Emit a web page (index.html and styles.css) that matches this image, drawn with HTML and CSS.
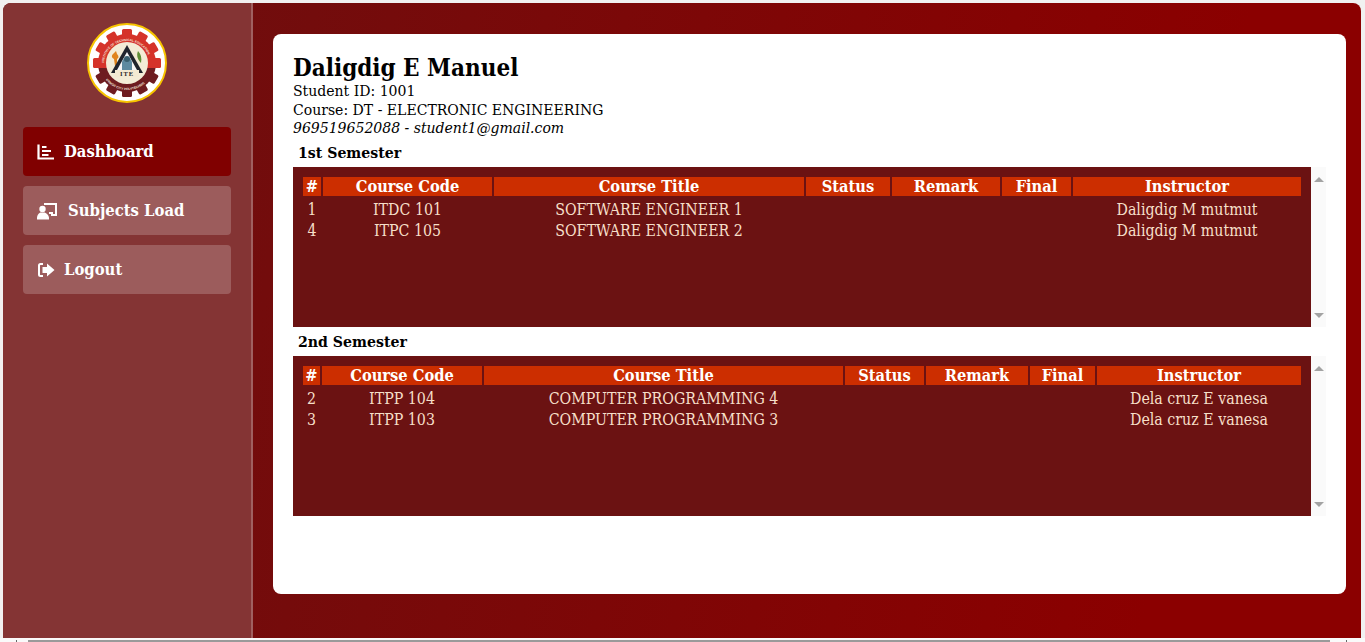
FILE: index.html
```html
<!DOCTYPE html>
<html lang="en">
<head>
<meta charset="utf-8">
<title>Student Dashboard</title>
<link rel="stylesheet" href="styles.css">
</head>
<body>
<div class="frame">
  <aside class="sidebar">
    <svg class="logo" viewBox="0 0 80 80" role="img" aria-label="ITE seal">
      <defs>
        <path id="arcTop" d="M17 41a23 23 0 0 1 46 0"/>
        <path id="arcBottom" d="M18.200 56a27 27 0 0 0 43.600 0"/>
        <clipPath id="clipTop"><rect x="0" y="0" width="80" height="45"/></clipPath>
        <clipPath id="clipBottom"><rect x="0" y="45" width="80" height="35"/></clipPath>
        <g id="gear">
          <circle cx="40" cy="40" r="29"/>
          <rect x="35" y="6" width="10" height="8" rx="1.500"/>
          <rect x="35" y="6" width="10" height="8" rx="1.500" transform="rotate(30 40 40)"/>
          <rect x="35" y="6" width="10" height="8" rx="1.500" transform="rotate(60 40 40)"/>
          <rect x="35" y="6" width="10" height="8" rx="1.500" transform="rotate(90 40 40)"/>
          <rect x="35" y="6" width="10" height="8" rx="1.500" transform="rotate(120 40 40)"/>
          <rect x="35" y="6" width="10" height="8" rx="1.500" transform="rotate(150 40 40)"/>
          <rect x="35" y="6" width="10" height="8" rx="1.500" transform="rotate(180 40 40)"/>
          <rect x="35" y="6" width="10" height="8" rx="1.500" transform="rotate(210 40 40)"/>
          <rect x="35" y="6" width="10" height="8" rx="1.500" transform="rotate(240 40 40)"/>
          <rect x="35" y="6" width="10" height="8" rx="1.500" transform="rotate(270 40 40)"/>
          <rect x="35" y="6" width="10" height="8" rx="1.500" transform="rotate(300 40 40)"/>
          <rect x="35" y="6" width="10" height="8" rx="1.500" transform="rotate(330 40 40)"/>
        </g>
      </defs>
      <circle cx="40" cy="40" r="39" fill="#fff" stroke="#f7c400" stroke-width="2"/>
      <use href="#gear" fill="#d5332a" clip-path="url(#clipTop)"/>
      <use href="#gear" fill="#6e1c20" clip-path="url(#clipBottom)"/>
      <circle cx="40" cy="40" r="21" fill="#f3ecd6"/>
      <text class="seal-text"><textPath href="#arcTop" startOffset="2%">INSTITUTE OF TECHNICAL EDUCATION</textPath></text>
      <text class="seal-text"><textPath href="#arcBottom" startOffset="2%">ORMOC CITY POLYTECHNIC</textPath></text>
      <path d="M26 31c-2 2-1 4 1 5l1 7h2l0-7c2-1 2-3 0-5l-1-3z" fill="#e0841c"/>
      <path d="M51 28c3 3 4 7 3 12-3-3-5-7-3-12z" fill="#5f8f37"/>
      <path d="M40 22 24 50h32z" fill="#20242c"/>
      <path d="M40 29 30 47h20z" fill="#f7f7f7"/>
      <path d="M35 47v-7c0-7 10-7 10 0v7z" fill="#5d8aa0"/>
      <circle cx="40" cy="36" r="3" fill="#39606f"/>
      <rect x="28" y="47" width="24" height="7" fill="#f3ead2"/>
      <text class="seal-ite" x="40" y="53">ITE</text>
    </svg>
    <nav class="menu">
      <a class="item active" href="#">
        <svg class="icon" viewBox="0 0 18 18"><path d="M1.500 1.500v14h15.500" fill="none" stroke="#fff" stroke-width="2.200"/><path d="M5 4h4.500M5 8h9M5 12h6.500" fill="none" stroke="#fff" stroke-width="1.800"/></svg>
        <span>Dashboard</span>
      </a>
      <a class="item item-load" href="#">
        <svg class="icon icon-wide" viewBox="0 0 21 18"><path d="M7 1h13v13h-6v-2h4V3H7z" fill="#fff"/><path d="M12 10h4v2h-4z" fill="#fff"/><circle cx="5.500" cy="7" r="3.200" fill="#fff"/><path d="M0 16c0-3 2-5.500 4-5.500h3c2 0 5 2.500 5 5.500v1.500H0z" fill="#fff"/></svg>
        <span>Subjects Load</span>
      </a>
      <a class="item" href="#">
        <svg class="icon" viewBox="0 0 18 18"><path d="M6 3H3.500C2.500 3 2 3.500 2 4.500v9c0 1 .5 1.500 1.500 1.500H6" fill="none" stroke="#fff" stroke-width="2"/><path d="M10 2.500 17.500 9 10 15.500V12H5.500V6H10z" fill="#fff"/></svg>
        <span>Logout</span>
      </a>
    </nav>
  </aside>
  <main class="main">
    <section class="card">
      <h1 class="name">Daligdig E Manuel</h1>
      <div class="line">Student ID: 1001</div>
      <div class="line">Course: DT - ELECTRONIC ENGINEERING</div>
      <div class="line contact">969519652088 - student1@gmail.com</div>
      <h2 class="sem">1st Semester</h2>
      <div class="box">
        <div class="box-body">
          <table class="grades first">
            <colgroup><col class="c1"><col class="c2"><col class="c3"><col class="c4"><col class="c5"><col class="c6"><col class="c7"></colgroup>
            <thead><tr><th>#</th><th>Course Code</th><th>Course Title</th><th>Status</th><th>Remark</th><th>Final</th><th>Instructor</th></tr></thead>
            <tbody>
              <tr><td>1</td><td>ITDC 101</td><td>SOFTWARE ENGINEER 1</td><td></td><td></td><td></td><td>Daligdig M mutmut</td></tr>
              <tr><td>4</td><td>ITPC 105</td><td>SOFTWARE ENGINEER 2</td><td></td><td></td><td></td><td>Daligdig M mutmut</td></tr>
            </tbody>
          </table>
        </div>
        <div class="rail"><i class="arrow-up"></i><i class="arrow-down"></i></div>
      </div>
      <h2 class="sem">2nd Semester</h2>
      <div class="box">
        <div class="box-body">
          <table class="grades second">
            <colgroup><col class="c1"><col class="c2"><col class="c3"><col class="c4"><col class="c5"><col class="c6"><col class="c7"></colgroup>
            <thead><tr><th>#</th><th>Course Code</th><th>Course Title</th><th>Status</th><th>Remark</th><th>Final</th><th>Instructor</th></tr></thead>
            <tbody>
              <tr><td>2</td><td>ITPP 104</td><td>COMPUTER PROGRAMMING 4</td><td></td><td></td><td></td><td>Dela cruz E vanesa</td></tr>
              <tr><td>3</td><td>ITPP 103</td><td>COMPUTER PROGRAMMING 3</td><td></td><td></td><td></td><td>Dela cruz E vanesa</td></tr>
            </tbody>
          </table>
        </div>
        <div class="rail"><i class="arrow-up"></i><i class="arrow-down"></i></div>
      </div>
    </section>
  </main>
</div>
<div class="pagebar"><i class="tick"></i><div class="pagebar-thumb"></div><i class="tick"></i></div>
</body>
</html>
```

FILE: styles.css
```css
* { box-sizing: border-box; }
html, body { height: 100%; }
body {
  margin: 0;
  padding: 3px 4px 0 3px;
  background: #f1f1f1;
  font-family: "DejaVu Serif", "Liberation Serif", serif;
  font-stretch: condensed;
  overflow: hidden;
}
.frame {
  display: grid;
  grid-template-columns: 250px 1fr;
  height: 635px;
  border-radius: 8px 8px 0 0;
  overflow: hidden;
  background: linear-gradient(100deg, #6b1010 0%, #8b0000 85%);
}
.pagebar {
  display: flex;
  height: 4px;
  margin: 0 -4px 0 -3px;
  padding: 2px 18px 0 16px;
  background: #fafafa;
}
.tick { width: 1px; background: #666; }
.pagebar-thumb { flex: 1; margin: 0 16px 0 11px; background: #9a9a9a; }
.sidebar {
  display: flex;
  flex-direction: column;
  align-items: center;
  padding-top: 20px;
  background: #843434;
  border-right: 2px solid #a06060;
}
.logo { width: 80px; height: 80px; display: block; }
.seal-text { font: bold 3.200px "Liberation Sans", sans-serif; fill: #f4e4dc; }
.seal-ite { font: bold 6.500px "Liberation Serif", serif; fill: #1f1f28; text-anchor: middle; letter-spacing: 1px; }
.menu {
  align-self: stretch;
  display: flex;
  flex-direction: column;
  gap: 10px;
  margin-top: 24px;
  padding: 0 20px;
}
.item {
  display: flex;
  align-items: center;
  gap: 9px;
  height: 49px;
  padding-left: 14px;
  border-radius: 4px;
  background: #9c5c5c;
  color: #fff;
  font-size: 16.500px;
  font-weight: 700;
  text-decoration: none;
}
.item-load { gap: 10px; }
.item.active { background: #800000; }
.icon { width: 18px; height: 18px; flex: none; }
.icon-wide { width: 21px; }
.main { padding: 31px 15px 44px 20px; min-width: 0; }
.card {
  height: 560px;
  padding: 20px 20px 0;
  background: #fff;
  border-radius: 8px;
  color: #000;
}
.name { margin: 0; font-size: 24px; line-height: 28px; font-weight: 700; }
.line { font-size: 15.600px; line-height: 18.500px; }
.contact { font-style: italic; }
.sem {
  margin: 0;
  padding: 5px 0 0 5px;
  height: 29px;
  font-size: 15.700px;
  line-height: 20px;
  font-weight: 700;
}
.box {
  display: flex;
  width: 1033px;
  height: 160px;
}
.box-body {
  flex: 1;
  min-width: 0;
  padding: 8px 8px 0;
  background: #6b1212;
}
.rail {
  display: flex;
  flex-direction: column;
  justify-content: space-between;
  align-items: center;
  width: 15px;
  padding: 10px 0 9px;
  background: #fafafa;
}
.arrow-up, .arrow-down {
  width: 0;
  height: 0;
  border-left: 5px solid transparent;
  border-right: 5px solid transparent;
}
.arrow-up { border-bottom: 5px solid #a3a3a3; }
.arrow-down { border-top: 5px solid #a3a3a3; }
.grades {
  width: 100%;
  table-layout: fixed;
  border-collapse: separate;
  border-spacing: 2px;
  color: #f6dfc8;
  font-size: 15.800px;
  text-align: center;
}
.grades th {
  padding: 0;
  height: 19px;
  font-size: 16.300px;
  line-height: 19px;
  background: #cc2e00;
  color: #fff;
  font-weight: 700;
}
.grades td { padding: 4px 0 0; height: 19px; line-height: 15px; }
.first .c1 { width: 18px; }
.first .c2 { width: 169px; }
.first .c3 { width: 310px; }
.first .c4 { width: 84px; }
.first .c5 { width: 108px; }
.first .c6 { width: 69px; }
.second .c1 { width: 17px; }
.second .c2 { width: 160px; }
.second .c3 { width: 359px; }
.second .c4 { width: 79px; }
.second .c5 { width: 102px; }
.second .c6 { width: 65px; }
```
